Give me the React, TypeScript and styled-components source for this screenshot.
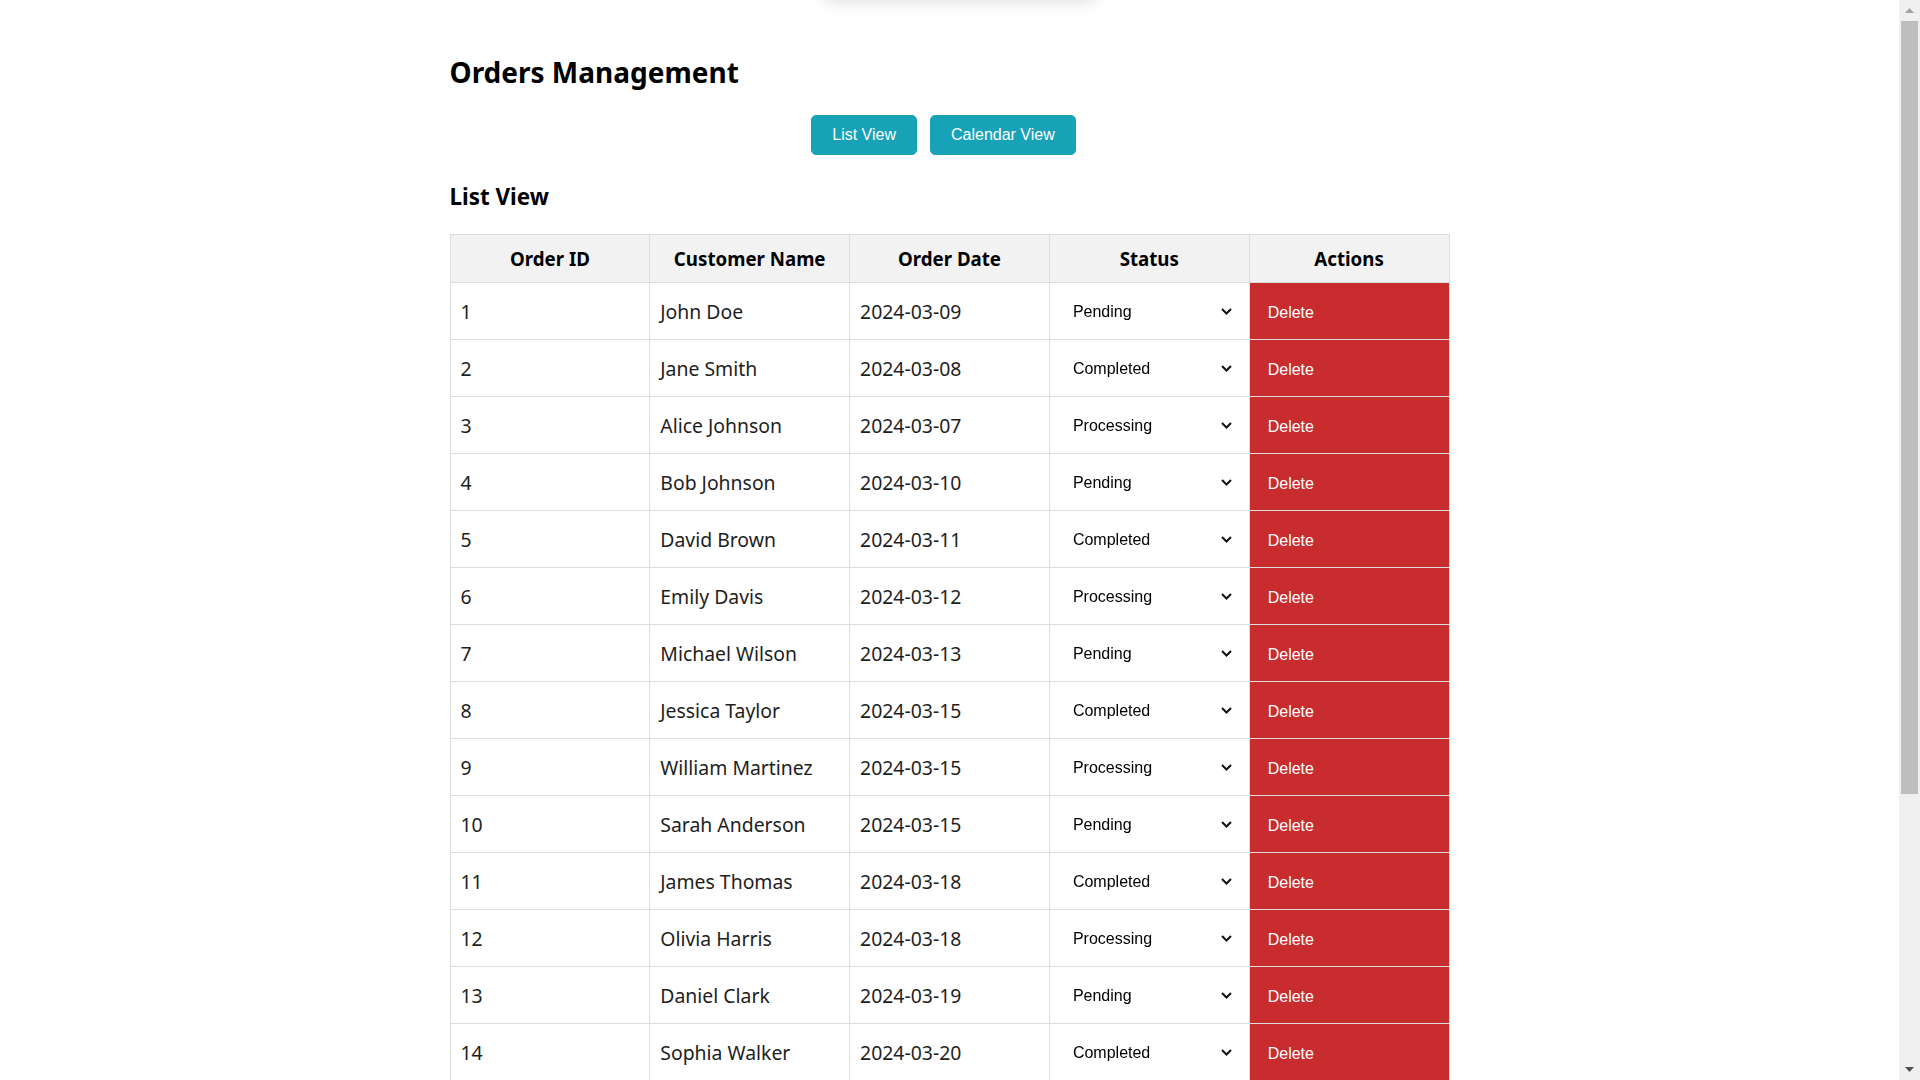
import React, { useState } from "react";
import styled, { createGlobalStyle } from "styled-components";

const GlobalStyle = createGlobalStyle`
  html, body {
    margin: 0;
    padding: 0;
    background: #ffffff;
  }
  body {
    font-family: "Noto Sans", "Open Sans", sans-serif;
    color: #222;
    padding-right: 21px;
  }
  ::-webkit-scrollbar {
    width: 0;
  }
`;

const ScrollTrack = styled.div`
  position: fixed;
  top: 0;
  right: 0;
  bottom: 0;
  width: 21px;
  background: #f0f0f0;
  display: flex;
  flex-direction: column;
  align-items: center;
  z-index: 10;
`;

const ScrollArrow = styled.div`
  width: 21px;
  height: 21px;
  flex: none;
  display: flex;
  align-items: center;
  justify-content: center;
`;

const ScrollThumb = styled.div`
  width: 17px;
  height: 773px;
  background: #bebebe;
  flex: none;
`;

const ScrollSpacer = styled.div`
  flex: 1;
`;

const HiddenToast = styled.div`
  position: fixed;
  top: -60px;
  left: 50%;
  transform: translateX(-50%);
  width: 270px;
  height: 60px;
  background: #fff;
  box-shadow: 0 2px 16px rgba(0, 0, 0, 0.13);
  border-radius: 6px;
`;

const Page = styled.div`
  width: 1000px;
  margin: 0 auto;
  padding: 52px 0 20px;
`;

const Title = styled.h1`
  margin: 0;
  font-size: 28px;
  line-height: 40px;
  font-weight: 700;
  color: #000;
`;

const ButtonBar = styled.div`
  display: flex;
  justify-content: center;
  gap: 13px;
  padding-right: 12px;
  margin-top: 23px;
`;

const ViewButton = styled.button`
  font-family: "Liberation Sans", Arial, sans-serif;
  font-size: 16px;
  line-height: 18px;
  color: #fff;
  background: #17a2b8;
  border: 1px solid #17a2b8;
  border-radius: 5px;
  padding: 10px 20px;
  cursor: pointer;
`;

const SectionTitle = styled.h2`
  margin: 26px 0 0;
  font-size: 22.4px;
  line-height: 32px;
  font-weight: 700;
  color: #000;
`;

const Table = styled.table`
  margin-top: 21px;
  width: 1000px;
  table-layout: fixed;
  border-collapse: collapse;
  border: 1px solid #ddd;
`;

const HeadCell = styled.th`
  height: 46px;
  padding: 1px 10px 0;
  background: #f2f2f2;
  border: 1px solid #ddd;
  font-size: 18.7px;
  line-height: 24px;
  font-weight: 700;
  color: #000;
  text-align: center;
`;

const Cell = styled.td`
  height: 54px;
  padding: 2px 10px 0;
  border: 1px solid #ddd;
  font-size: 19.4px;
  line-height: 24px;
  color: #1e1e1e;
  text-align: left;
`;

const ActionCell = styled.td`
  height: 56px;
  padding: 0;
  border: 1px solid #ddd;
  background: #c82c2f;
`;

const SelectWrap = styled.div`
  position: relative;
  margin-top: -2px;
`;

const StatusSelect = styled.select`
  appearance: none;
  -webkit-appearance: none;
  display: block;
  width: 100%;
  height: 36px;
  padding: 0 30px 0 13px;
  border: none;
  background: transparent;
  font-family: "Liberation Sans", Arial, sans-serif;
  font-size: 16px;
  color: #000;
  outline: none;
  cursor: pointer;
`;

const Chevron = styled.svg`
  position: absolute;
  right: 7px;
  top: 50%;
  margin-top: -3px;
  pointer-events: none;
`;

const DeleteButton = styled.button`
  display: block;
  width: 100%;
  height: 56px;
  padding: 3px 18px 0;
  margin: 0;
  border: none;
  background: #c82c2f;
  color: #fff;
  font-family: "Liberation Sans", Arial, sans-serif;
  font-size: 16px;
  text-align: left;
  cursor: pointer;
`;

type Order = { id: number; name: string; date: string; status: string };

const names = [
  "John Doe",
  "Jane Smith",
  "Alice Johnson",
  "Bob Johnson",
  "David Brown",
  "Emily Davis",
  "Michael Wilson",
  "Jessica Taylor",
  "William Martinez",
  "Sarah Anderson",
  "James Thomas",
  "Olivia Harris",
  "Daniel Clark",
  "Sophia Walker",
  "Matthew Lewis",
  "Ava Robinson",
  "Joseph Young",
  "Mia Hall",
  "Andrew Allen",
  "Isabella King",
];
const dates = [
  "2024-03-09",
  "2024-03-08",
  "2024-03-07",
  "2024-03-10",
  "2024-03-11",
  "2024-03-12",
  "2024-03-13",
  "2024-03-15",
  "2024-03-15",
  "2024-03-15",
  "2024-03-18",
  "2024-03-18",
  "2024-03-19",
  "2024-03-20",
  "2024-03-21",
  "2024-03-22",
  "2024-03-22",
  "2024-03-25",
  "2024-03-26",
  "2024-03-27",
];
const statuses = ["Pending", "Completed", "Processing"];

const initialOrders: Order[] = names.map((name, i) => ({
  id: i + 1,
  name,
  date: dates[i],
  status: statuses[i % 3],
}));

export default function App() {
  const [orders, setOrders] = useState<Order[]>(initialOrders);

  const setStatus = (id: number, status: string) =>
    setOrders((prev) => prev.map((o) => (o.id === id ? { ...o, status } : o)));
  const remove = (id: number) =>
    setOrders((prev) => prev.filter((o) => o.id !== id));

  return (
    <>
      <GlobalStyle />
      <HiddenToast />
      <ScrollTrack>
        <ScrollArrow>
          <svg width="9" height="5" viewBox="0 0 9 5">
            <polygon points="4.5,0 9,5 0,5" fill="#a3a3a3" />
          </svg>
        </ScrollArrow>
        <ScrollThumb />
        <ScrollSpacer />
        <ScrollArrow>
          <svg width="9" height="5" viewBox="0 0 9 5">
            <polygon points="0,0 9,0 4.5,5" fill="#505050" />
          </svg>
        </ScrollArrow>
      </ScrollTrack>
      <Page>
        <Title>Orders Management</Title>
        <ButtonBar>
          <ViewButton>List View</ViewButton>
          <ViewButton>Calendar View</ViewButton>
        </ButtonBar>
        <SectionTitle>List View</SectionTitle>
        <Table>
          <thead>
            <tr>
              <HeadCell>Order ID</HeadCell>
              <HeadCell>Customer Name</HeadCell>
              <HeadCell>Order Date</HeadCell>
              <HeadCell>Status</HeadCell>
              <HeadCell>Actions</HeadCell>
            </tr>
          </thead>
          <tbody>
            {orders.map((o) => (
              <tr key={o.id}>
                <Cell>{o.id}</Cell>
                <Cell>{o.name}</Cell>
                <Cell>{o.date}</Cell>
                <Cell>
                  <SelectWrap>
                    <StatusSelect
                      value={o.status}
                      onChange={(e) => setStatus(o.id, e.target.value)}
                    >
                      {statuses.map((s) => (
                        <option key={s} value={s}>
                          {s}
                        </option>
                      ))}
                    </StatusSelect>
                    <Chevron width="11" height="7" viewBox="0 0 11 7">
                      <path
                        d="M1 1 L5.5 5.5 L10 1"
                        fill="none"
                        stroke="#111"
                        strokeWidth="2"
                      />
                    </Chevron>
                  </SelectWrap>
                </Cell>
                <ActionCell>
                  <DeleteButton onClick={() => remove(o.id)}>Delete</DeleteButton>
                </ActionCell>
              </tr>
            ))}
          </tbody>
        </Table>
      </Page>
    </>
  );
}
